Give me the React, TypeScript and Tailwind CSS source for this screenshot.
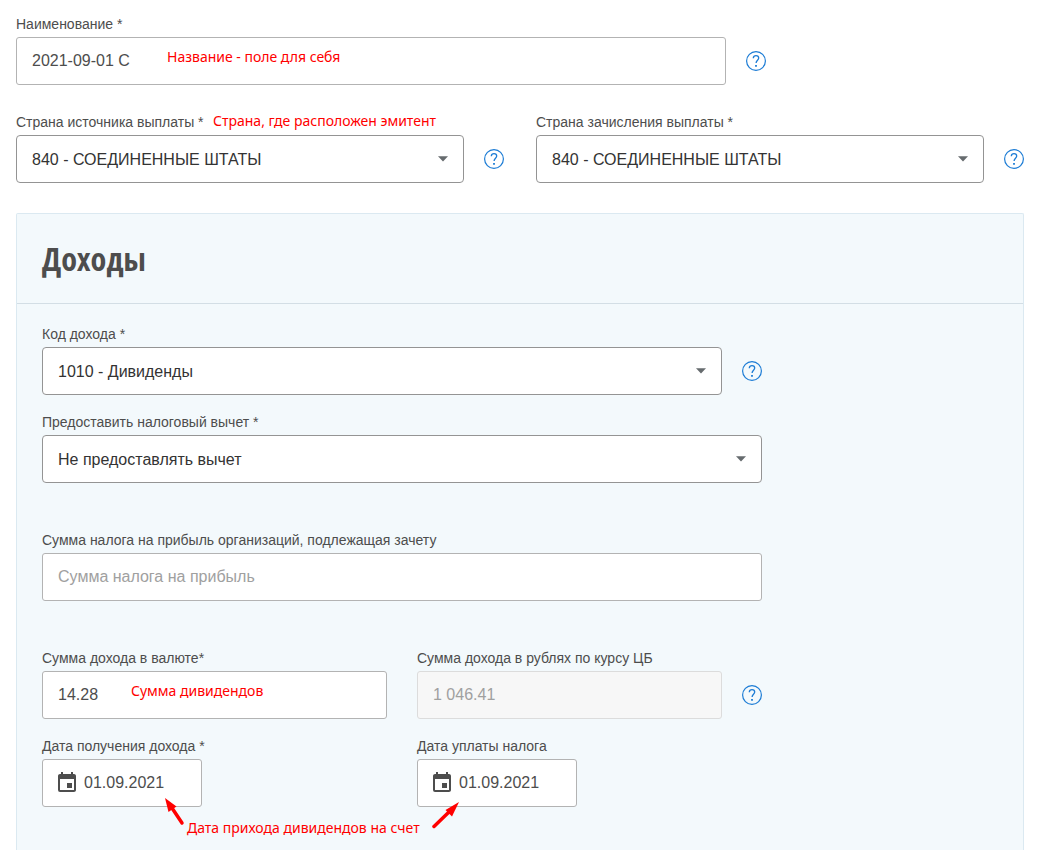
import { ReactNode, useState } from 'react'
import { MdEvent } from 'react-icons/md'

const COUNTRIES = ['840 - СОЕДИНЕННЫЕ ШТАТЫ', '643 - РОССИЯ']
const INCOME_CODES = ['1010 - Дивиденды']
const DEDUCTIONS = ['Не предоставлять вычет']

interface FieldProps {
  id: string
  label: string
  help?: boolean
  children: ReactNode
}

function HelpButton({ label }: { label: string }) {
  return (
    <button type="button" aria-label={`Справка: ${label}`} className="shrink-0 cursor-pointer text-[#1c7cd5]">
      <svg width="20" height="20" viewBox="0 0 20 20" fill="none" stroke="currentColor">
        <circle cx="10" cy="10" r="9.4" strokeWidth="1.2" />
        <path d="M7.3 7.3C7.3 5.6 8.4 4.6 10 4.6s2.7 1 2.7 2.5c0 2.1-2.6 2.2-2.6 4.9" strokeWidth="1.3" />
        <path d="M9.1 14h1.8v1.8H9.1z" fill="currentColor" stroke="none" />
      </svg>
    </button>
  )
}

function Field({ id, label, help = false, children }: FieldProps) {
  return (
    <div>
      <label htmlFor={id} className="block pb-[2px] text-sm leading-[22px] text-[#4d4d4d]">
        {label}
      </label>
      <div className="flex items-center gap-5">
        <div className="relative min-w-0 flex-1">{children}</div>
        {help && <HelpButton label={label} />}
      </div>
    </div>
  )
}

function TextInput({ id, initial = '', placeholder, disabled = false }: { id: string; initial?: string; placeholder?: string; disabled?: boolean }) {
  const [value, setValue] = useState(initial)

  return (
    <input
      id={id}
      type="text"
      value={value}
      placeholder={placeholder}
      disabled={disabled}
      onChange={(e) => setValue(e.target.value)}
      className="block h-12 w-full rounded-[3px] border border-[#b3b3b3] bg-white px-[15px] text-base text-[#4d4d4d] placeholder:text-[#a0a0a0] disabled:border-[#dcdcdc] disabled:bg-[#f7f7f7] disabled:text-[#a0a0a0]"
    />
  )
}

function SelectInput({ id, options }: { id: string; options: string[] }) {
  const [value, setValue] = useState(options[0])

  return (
    <>
      <select
        id={id}
        value={value}
        onChange={(e) => setValue(e.target.value)}
        className="block h-12 w-full appearance-none rounded-[4px] border border-[#949494] bg-white pl-[15px] pr-10 pt-[2px] text-base text-[#333333]"
      >
        {options.map((option) => (
          <option key={option}>{option}</option>
        ))}
      </select>
      <svg className="pointer-events-none absolute right-4 top-[21px]" width="10" height="6" viewBox="0 0 10 6">
        <path d="M0 .3h10L5 5.600z" fill="#666b6e" />
      </svg>
    </>
  )
}

function DateInput({ id, initial }: { id: string; initial: string }) {
  const [value, setValue] = useState(initial)

  return (
    <div className="flex h-12 w-40 items-center gap-[5px] rounded-[3px] border border-[#b3b3b3] bg-white px-3">
      <button type="button" aria-label="Открыть календарь" className="shrink-0 cursor-pointer text-[#4d4d4d]">
        <MdEvent size={24} />
      </button>
      <input
        id={id}
        type="text"
        value={value}
        onChange={(e) => setValue(e.target.value)}
        className="h-full w-full min-w-0 bg-transparent text-base text-[#4d4d4d]"
      />
    </div>
  )
}

function Note({ children }: { children: ReactNode }) {
  return (
    <span className="whitespace-nowrap font-['Noto_Sans','Open_Sans',sans-serif] text-sm leading-5 text-[#ff0000]">
      {children}
    </span>
  )
}

export default function App() {
  return (
    <main className="flex min-h-screen flex-col bg-white px-4 pt-[13px] font-['Liberation_Sans',Arial,sans-serif]">
      <div className="grid grid-cols-4 gap-6">
        <div className="col-span-3">
          <Field id="name" label="Наименование *" help>
            <TextInput id="name" initial="2021-09-01 C" />
            <div className="pointer-events-none absolute left-[151px] top-[10px] flex">
              <Note>Название - поле для себя</Note>
            </div>
          </Field>
        </div>
      </div>

      <div className="mt-[26px] grid grid-cols-2 gap-8">
        <Field id="source-country" label="Страна источника выплаты *" help>
          <SelectInput id="source-country" options={COUNTRIES} />
          <div className="pointer-events-none absolute bottom-full left-[197px] flex pb-1">
            <Note>Страна, где расположен эмитент</Note>
          </div>
        </Field>
        <Field id="target-country" label="Страна зачисления выплаты *" help>
          <SelectInput id="target-country" options={COUNTRIES} />
        </Field>
      </div>

      <section className="mt-[30px] flex-1 rounded-t-[2px] border border-b-0 border-[#dbe9f1] bg-[#f3f9fc]">
        <header className="flex h-[90px] items-center border-b border-[#d3dee5] px-[25px]">
          <h2 className="font-['Open_Sans_Condensed','Liberation_Sans_Narrow','DejaVu_Sans_Condensed',sans-serif] text-[32px] font-bold text-[#4d4d4d]">
            Доходы
          </h2>
        </header>

        <div className="max-w-[770px] px-[25px] pb-10 pt-[19px]">
          <div className="flex flex-col gap-4">
            <Field id="income-code" label="Код дохода *" help>
              <SelectInput id="income-code" options={INCOME_CODES} />
            </Field>
            <Field id="deduction" label="Предоставить налоговый вычет *">
              <SelectInput id="deduction" options={DEDUCTIONS} />
            </Field>
          </div>

          <div className="my-[46px]">
            <Field id="profit-tax" label="Сумма налога на прибыль организаций, подлежащая зачету">
              <TextInput id="profit-tax" placeholder="Сумма налога на прибыль" />
            </Field>
          </div>

          <div className="relative grid grid-cols-2 gap-x-[30px] gap-y-4">
            <Field id="amount" label="Сумма дохода в валюте*">
              <TextInput id="amount" initial="14.28" />
              <div className="pointer-events-none absolute left-[89px] top-[10px] flex">
                <Note>Сумма дивидендов</Note>
              </div>
            </Field>
            <Field id="amount-rub" label="Сумма дохода в рублях по курсу ЦБ" help>
              <TextInput id="amount-rub" initial="1 046.41" disabled />
            </Field>
            <Field id="income-date" label="Дата получения дохода *">
              <DateInput id="income-date" initial="01.09.2021" />
            </Field>
            <Field id="tax-date" label="Дата уплаты налога">
              <DateInput id="tax-date" initial="01.09.2021" />
            </Field>

            {/* Arrows from the note up to both date fields */}
            <div className="pointer-events-none absolute -bottom-[31px] left-[123px] flex items-end">
              <svg className="mb-3" width="22" height="28" viewBox="0 0 22 28">
                <path d="M7 10l10 15" stroke="#ff0000" strokeWidth="3.5" strokeLinecap="round" />
                <path d="M0 0l3.500 14 8-5.500z" fill="#ff0000" />
              </svg>
              <Note>Дата прихода дивидендов на счет</Note>
              <svg className="mb-[9px] ml-3" width="27" height="27" viewBox="0 0 27 27">
                <path d="M18 9L2 24.500" stroke="#ff0000" strokeWidth="3.5" strokeLinecap="round" />
                <path d="M27 0L13.500 8l6.500 6.500z" fill="#ff0000" />
              </svg>
            </div>
          </div>
        </div>
      </section>
    </main>
  )
}
